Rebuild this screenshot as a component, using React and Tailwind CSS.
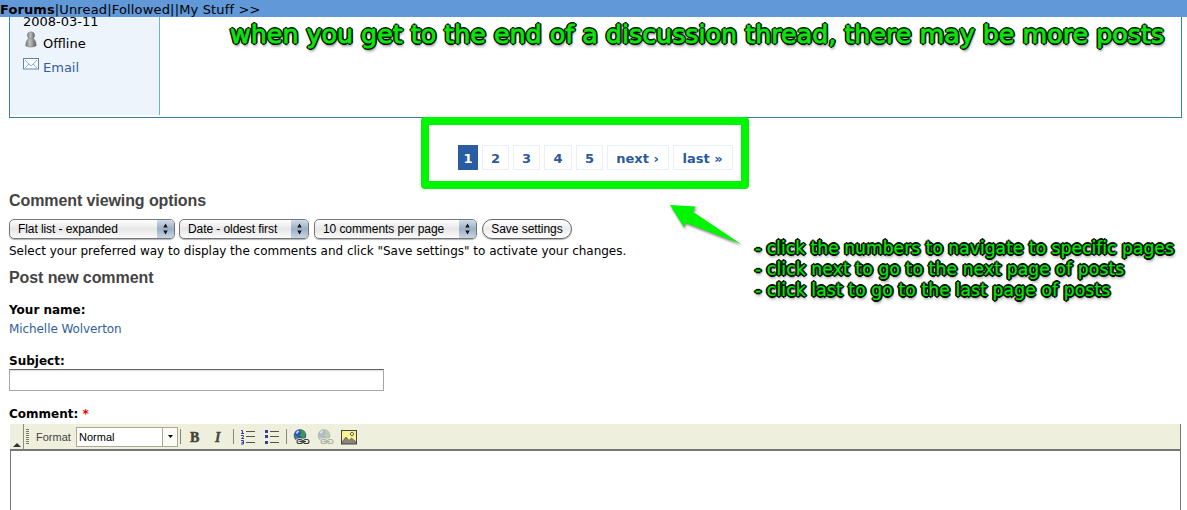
import React from "react";

const outlined =
  "absolute whitespace-nowrap text-[#0ce60c] [text-shadow:2px_0_0_#001400,-2px_0_0_#001400,0_2px_0_#001400,0_-2px_0_#001400,1.4px_1.4px_0_#001400,-1.4px_1.4px_0_#001400,1.4px_-1.4px_0_#001400,-1.4px_-1.4px_0_#001400,0_0_1px_#001400,1px_3px_3px_rgba(0,0,0,0.6)]";

function MacSelect({ children, className }) {
  return (
    <div
      className={
        "flex h-[20px] items-stretch overflow-hidden rounded-[5px] border border-[#777] bg-linear-to-b from-white via-[#e6e6e6] to-[#fbfbfb] shadow-[0_1px_1px_rgba(0,0,0,0.3)] " +
        className
      }
    >
      <span className="flex-1 whitespace-nowrap pl-[8px] font-['Liberation_Sans',sans-serif] text-[12px] leading-[18px] tracking-[-0.08px] text-black">
        {children}
      </span>
      <span className="flex w-[17px] items-center justify-center bg-linear-to-b from-[#d2dce8] via-[#9cafc3] to-[#c7d7e6]">
        <svg width="7" height="12" viewBox="0 0 7 12">
          <path d="M3.5 0.5 5.7 4.5H1.3zM3.5 11.5 5.7 7.5H1.3z" fill="#111" />
        </svg>
      </span>
    </div>
  );
}

function PageLink({ children, className }) {
  return (
    <a
      className={
        "flex h-[25px] items-center justify-center whitespace-nowrap border border-[#e8eff7] pt-[2px] text-[#2a5a9c] " +
        className
      }
    >
      {children}
    </a>
  );
}

function Separator({ className }) {
  return <span className={"h-[15px] w-px bg-[#8a8a6c] " + className} />;
}

function UserIcon() {
  return (
    <svg width="12" height="17" viewBox="0 0 12 17">
      <defs>
        <linearGradient id="body" x1="0" x2="1">
          <stop offset="0" stopColor="#777" />
          <stop offset="0.4" stopColor="#c2c2c2" />
          <stop offset="1" stopColor="#5c5c5c" />
        </linearGradient>
      </defs>
      <path d="M3.6 7.5h4.8c1.8 1.2 2.8 4.5 2.8 7.3-2.5 1.6-8 1.6-10.5 0 0-2.8 1.1-6.1 2.9-7.3z" fill="url(#body)" stroke="#777" strokeWidth=".6" />
      <circle cx="6" cy="4.4" r="3.6" fill="url(#body)" stroke="#888" strokeWidth=".6" />
    </svg>
  );
}

function MailIcon() {
  return (
    <svg width="16" height="12" viewBox="0 0 16 12">
      <rect x=".5" y=".5" width="15" height="10.5" fill="#f8fbff" stroke="#5b87b5" />
      <path d="M2 2.2 8 8l6-5.8M2 9.8 6 6M14 9.8 10 6" fill="none" stroke="#8daed3" strokeWidth="1" />
    </svg>
  );
}

function NumberedList() {
  return (
    <svg width="16" height="16" viewBox="0 0 16 16">
      <g fill="none" stroke="#3b3b96" strokeWidth="1">
        <path d="M1 1.5h1.5V4M1 4.5h3M1 6.5h2.5v1.3L1.5 9.5h2.5M1 11.5h2.5v3.5H1M1.5 13.3h2" />
      </g>
      <path d="M6 2.5h9M6 7.5h9M6 13.5h9" stroke="#555548" />
    </svg>
  );
}

function BulletList() {
  return (
    <svg width="16" height="16" viewBox="0 0 16 16">
      <path d="M1 1h3v3H1zM1 6h3v3H1zM1 12h3v3H1z" fill="#3b3ba0" />
      <path d="M6 2.5h9M6 7.5h9M6 13.5h9" stroke="#555548" />
    </svg>
  );
}

function LinkGlobe({ className }) {
  return (
    <svg width="17" height="17" viewBox="0 0 17 17" className={className}>
      <circle cx="7" cy="6.5" r="5.9" fill="#2d55b8" stroke="#29406e" strokeWidth=".6" />
      <path d="M7 1.5 10 1l2.4 3-.4 4-2 1.5-2-2L6.5 6l1.8-2zM1.5 6l3 1.8L5 11l-2.4-1.5z" fill="#3f9a48" />
      <path d="M3 3.2 5 1.6l1.3.6L4 5.2z" fill="#c5def5" />
      <g fill="none" stroke="#eeeedc" strokeWidth="2.4">
        <rect x="4" y="10.5" width="6" height="4" rx="2" />
        <rect x="10" y="10.5" width="6" height="4" rx="2" />
      </g>
      <g fill="none" stroke="#3d3d38" strokeWidth="1.1">
        <rect x="4" y="10.5" width="5.5" height="4" rx="2" />
        <rect x="10.5" y="10.5" width="5.5" height="4" rx="2" />
        <path d="M7 12.5h6" />
      </g>
    </svg>
  );
}

function ImageIcon() {
  return (
    <svg width="16" height="15" viewBox="0 0 16 15">
      <rect x=".5" y=".5" width="15" height="13.5" fill="#f8f294" stroke="#45453c" />
      <circle cx="11" cy="4" r="1.6" fill="#fffbe0" stroke="#65603a" />
      <path d="M1 13.5V12l4-5 3 3.5L10.5 8l4.5 4v1.5z" fill="#858580" stroke="#55554e" strokeWidth=".7" />
    </svg>
  );
}

export default function App() {
  return (
    <div className="relative flex h-[510px] w-[1187px] flex-col overflow-hidden bg-white font-['DejaVu_Sans',sans-serif] text-[13px] text-black">
      <header className="h-[17px] shrink-0 whitespace-nowrap bg-[#6098d8] text-[13px] leading-[19px]">
        <b className="tracking-[0.08px]">Forums</b>
        <span className="tracking-[0.16px]">|Unread|Followed||My Stuff &gt;&gt;</span>
      </header>

      <section className="ml-[9px] flex h-[101px] w-[1173px] shrink-0 overflow-hidden border border-t-0 border-[#37839f]">
        <aside className="h-[98px] w-[150px] border-r border-[#6fb0c8] bg-[#edf4fc] pl-[13px]">
          <div className="-mt-[3px] h-[15px] leading-[15px]">2008-03-11</div>
          <div className="flex h-[24px] pl-[2px] pt-[2px]">
            <UserIcon />
            <span className="ml-[6px] mt-[4px] leading-[18px]">Offline</span>
          </div>
          <div className="flex h-[24px] pt-[5px]">
            <MailIcon />
            <span className="ml-[4px] mt-px leading-[18px] text-[#315f9c]">Email</span>
          </div>
        </aside>
      </section>

      <nav className="ml-[458px] mt-[27px] flex h-[25px] shrink-0 text-[13px] font-bold">
        <a className="flex w-[20px] items-center justify-center bg-[#2a5ca2] pt-[2px] text-white">1</a>
        <PageLink className="ml-[4px] w-[27px]">2</PageLink>
        <PageLink className="ml-[4px] w-[27px]">3</PageLink>
        <PageLink className="ml-[4px] w-[28px]">4</PageLink>
        <PageLink className="ml-[4px] w-[27px]">5</PageLink>
        <PageLink className="ml-[4px] w-[62px] pr-px">next ›</PageLink>
        <PageLink className="ml-[4px] w-[60px] pr-px">last »</PageLink>
      </nav>

      <main className="flex flex-col pl-[9px]">
        <h2 className="mt-[21px] h-[20px] font-['Liberation_Sans',sans-serif] text-[16px] font-bold leading-[20px] tracking-[-0.09px] text-[#444]">
          Comment viewing options
        </h2>
        <div className="mt-[8px] flex h-[20px]">
          <MacSelect className="w-[166px]">Flat list - expanded</MacSelect>
          <MacSelect className="ml-[4px] w-[130px]">Date - oldest first</MacSelect>
          <MacSelect className="ml-[5px] w-[163px]">10 comments per page</MacSelect>
          <button className="ml-[5px] h-[20px] w-[90px] whitespace-nowrap rounded-full border border-[#666] bg-linear-to-b from-white via-[#ececec] to-white font-['Liberation_Sans',sans-serif] text-[12px] leading-[18px] tracking-[-0.05px] shadow-[0_1px_1px_rgba(0,0,0,0.3)]">
            Save settings
          </button>
        </div>
        <p className="mt-[3px] h-[18px] whitespace-nowrap text-[12px] leading-[18px] tracking-[-0.01px]">
          Select your preferred way to display the comments and click "Save settings" to activate your changes.
        </p>
        <h2 className="mt-[8px] h-[20px] font-['Liberation_Sans',sans-serif] text-[16px] font-bold leading-[20px] tracking-[-0.09px] text-[#444]">
          Post new comment
        </h2>
        <div className="mt-[13px] h-[19px] text-[12px] font-bold leading-[19px]">Your name:</div>
        <div className="h-[19px] text-[12px] leading-[19px] tracking-[-0.08px] text-[#315f9c]">Michelle Wolverton</div>
        <label className="mt-[13px] h-[19px] text-[12px] font-bold leading-[19px]">Subject:</label>
        <input className="-mt-[2px] block h-[22px] w-[375px] border border-[#a8a8a8] border-t-[#666] bg-white shadow-[inset_0_1px_1px_#ddd]" />
        <label className="mt-[14px] h-[19px] text-[12px] font-bold leading-[19px]">
          Comment: <span className="text-[#e00000]">*</span>
        </label>

        <div className="ml-px flex h-[25px] w-[1171px] items-center border-r border-[#777] bg-[#efefde]">
          <span className="flex h-[25px] w-[14px] items-end justify-center border-r border-[#8c8c80] pb-[2px]">
            <svg width="8" height="4" viewBox="0 0 8 4">
              <path d="M4 0 8 4H0z" fill="#333" />
            </svg>
          </span>
          <svg width="3" height="17" viewBox="0 0 3 17" className="ml-[2px]">
            <path d="M1.5 1v16" stroke="#77776a" strokeWidth="3" strokeDasharray="1 1" />
          </svg>
          <span className="ml-[7px] w-[40px] pt-px font-['Liberation_Sans',sans-serif] text-[11px] text-[#444]">Format</span>
          <span className="flex h-[20px] w-[102px] items-center border border-[#aaa998] bg-white font-['Liberation_Sans',sans-serif] text-[11px]">
            <span className="flex-1 pl-[2px] pt-px">Normal</span>
            <span className="flex h-[18px] w-[15px] items-center justify-center border-l border-[#aaa998] bg-[#fbfbf6]">
              <svg width="5" height="3" viewBox="0 0 5 3">
                <path d="M0 0h5L2.5 3z" />
              </svg>
            </span>
          </span>
          <Separator className="ml-[2px]" />
          <span className="ml-[9px] w-[11px] pt-px font-['Liberation_Serif',serif] text-[14px] font-bold text-[#444438] [-webkit-text-stroke:0.5px_#444438]">B</span>
          <span className="ml-[14px] w-[9px] pt-px font-['Liberation_Serif',serif] text-[14px] font-bold italic text-[#444438] [-webkit-text-stroke:0.3px_#444438]">I</span>
          <Separator className="ml-[9px]" />
          <span className="ml-[6px] pt-px"><NumberedList /></span>
          <span className="ml-[8px] pt-px"><BulletList /></span>
          <Separator className="ml-[6px]" />
          <LinkGlobe className="ml-[6px] mt-px" />
          <LinkGlobe className="ml-[7px] mt-px opacity-35 grayscale-[40%]" />
          <span className="ml-[7px] pt-px"><ImageIcon /></span>
        </div>
        <div className="ml-px h-[70px] w-[1171px] border border-t-2 border-[#777] bg-white" />
      </main>

      <div className="absolute left-[421px] top-[117px] h-[72px] w-[328px] rounded-[4px] border-8 border-[#00f500]" />
      <svg className="absolute left-[660px] top-[195px] [filter:drop-shadow(1px_2px_1px_rgba(0,0,0,0.45))]" width="90" height="60" viewBox="0 0 90 60">
        <path d="M10 10 36 11.5 32.5 16.5 81 49 25 27.5 24 32.5z" fill="#00f500" />
      </svg>
      <p className={outlined + " left-[230px] top-[18px] text-[25.35px] leading-[32px] [-webkit-text-stroke:0.8px_#0ce60c]"}>
        when you get to the end of a discussion thread, there may be more posts
      </p>
      <div className={outlined + " left-[755px] top-[238px] text-[17.15px] leading-[21px] [-webkit-text-stroke:0.2px_#0ce60c]"}>
        <p className="tracking-[0.02px]">- click the numbers to navigate to specific pages</p>
        <p className="tracking-[0.12px]">- click next to go to the next page of posts</p>
        <p className="tracking-[0.12px]">- click last to go to the last page of posts</p>
      </div>
    </div>
  );
}
